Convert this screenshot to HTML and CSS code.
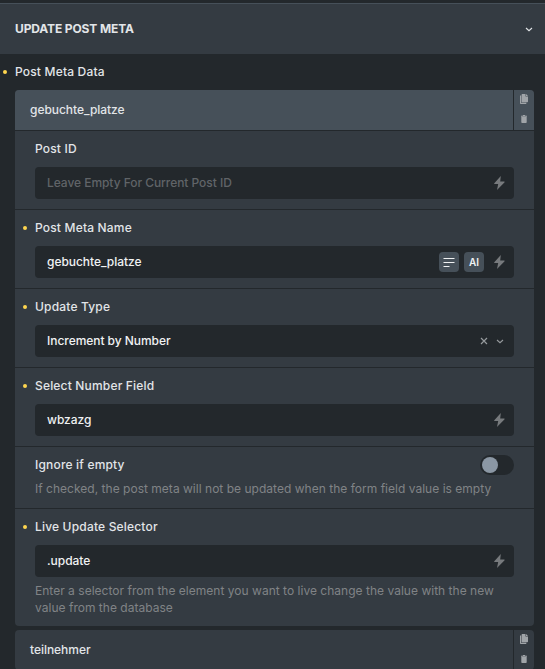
FILE: index.html
```html
<!DOCTYPE html>
<html lang="en">
<head>
<meta charset="utf-8">
<title>Update Post Meta</title>
<link rel="stylesheet" href="styles.css">
</head>
<body>
<svg class="defs" aria-hidden="true">
  <symbol id="bolt" viewBox="0 0 11 14"><path d="M6.8 0 .3 7.2q-.4.8.4.8H4.2L3 14l7.6-7.8q.3-.8-.5-.8H6.2z"/></symbol>
  <symbol id="copy" viewBox="0 0 8 10"><path d="M2.3 0h3.2v2.5H8v5q0 .7-.7.7h-5q-.7 0-.7-.7V.7q0-.7.7-.7zM6 0l2 2H6zM0 1.5h1.1v7.2h5.2V10H.7Q0 10 0 9.3z"/></symbol>
  <symbol id="trash" viewBox="0 0 6 8"><path d="M0 .7h1.7L2.1 0h1.8l.4.7H6v1H0zM.3 2h5.4v5.2q0 .8-.8.8H1.1q-.8 0-.8-.8z"/></symbol>
  <symbol id="chevron" viewBox="0 0 8 5"><path d="M1 1l3 2.7L7 1"/></symbol>
</svg>
<main class="panel">
  <header class="group-header">
    <h1>Update Post Meta</h1>
    <svg class="chevron"><use href="#chevron"/></svg>
  </header>
  <section class="group-body">
    <div class="label required">Post Meta Data</div>
    <div class="repeater">
      <article class="item">
        <div class="item-head open">
          <div class="item-title">gebuchte_platze</div>
          <div class="item-actions">
            <svg class="copy"><use href="#copy"/></svg>
            <svg class="trash"><use href="#trash"/></svg>
          </div>
        </div>
        <div class="control">
          <div class="label">Post ID</div>
          <div class="input"><span class="value placeholder">Leave Empty For Current Post ID</span><svg class="bolt"><use href="#bolt"/></svg></div>
        </div>
        <div class="control">
          <div class="label required">Post Meta Name</div>
          <div class="input">
            <span class="value">gebuchte_platze</span>
            <span class="chip"><svg class="lines" viewBox="0 0 12 9"><path d="M.5 .5h11M.5 4.5h11M.5 8.5h6"/></svg></span>
            <span class="chip">AI</span>
            <svg class="bolt"><use href="#bolt"/></svg>
          </div>
        </div>
        <div class="control">
          <div class="label required">Update Type</div>
          <div class="input select">
            <span class="value">Increment by Number</span>
            <svg class="clear" viewBox="0 0 8 8"><path d="M1 1l6 6M7 1L1 7"/></svg>
            <svg class="chevron"><use href="#chevron"/></svg>
          </div>
        </div>
        <div class="control">
          <div class="label required">Select Number Field</div>
          <div class="input"><span class="value">wbzazg</span><svg class="bolt"><use href="#bolt"/></svg></div>
        </div>
        <div class="control check">
          <div class="row"><div class="label">Ignore if empty</div><span class="toggle"></span></div>
          <p class="description">If checked, the post meta will not be updated when the form field value is empty</p>
        </div>
        <div class="control">
          <div class="label required">Live Update Selector</div>
          <div class="input"><span class="value">.update</span><svg class="bolt"><use href="#bolt"/></svg></div>
          <p class="description">Enter a selector from the element you want to live change the value with the new value from the database</p>
        </div>
      </article>
      <article class="item">
        <div class="item-head">
          <div class="item-title">teilnehmer</div>
          <div class="item-actions">
            <svg class="copy"><use href="#copy"/></svg>
            <svg class="trash"><use href="#trash"/></svg>
          </div>
        </div>
      </article>
    </div>
  </section>
</main>
</body>
</html>
```
FILE: styles.css
```css
* { box-sizing: border-box; }
html, body { height: 100%; }
body {
  margin: 0;
  overflow: hidden;
  background: #23282c;
  color: #e2e5e8;
  font: 500 12px/18px Inter, "Liberation Sans", sans-serif;
}
svg { display: block; flex: none; fill: currentColor; }
.defs { position: absolute; width: 0; height: 0; }
.panel { padding-top: 3px; }
.group-header {
  display: flex;
  align-items: center;
  justify-content: space-between;
  height: 51px;
  padding: 0 12px 0 15px;
  border-top: 1px solid #465059;
  background: #343b42;
}
h1 { margin: 0; font-size: 12px; font-weight: 700; text-transform: uppercase; letter-spacing: -.13px; }
.chevron { width: 8px; height: 5px; fill: none; stroke: currentColor; stroke-width: 1.1; }
.group-body { padding: 9px 11px 0 15px; }
.label { position: relative; height: 18px; letter-spacing: .18px; }
.required::before {
  content: "";
  position: absolute;
  left: -12px;
  top: 7px;
  width: 4px;
  height: 4px;
  border-radius: 50%;
  background: #ffd64f;
}
.repeater { display: flex; flex-direction: column; gap: 4px; margin-top: 9px; }
.item { overflow: hidden; border-radius: 4px; background: #343b42; }
.item-head { display: flex; height: 40px; }
.item-head.open { background: #465059; }
.item-title { flex: 1; padding: 11px 15px; letter-spacing: -.04px; }
.item-actions {
  display: flex;
  flex-direction: column;
  align-items: center;
  width: 21px;
  padding-top: 4px;
  border-left: 1px solid #23282c;
  color: #a0a4a8;
}
.copy { width: 8px; height: 10px; }
.trash { width: 6px; height: 8px; margin-top: 11px; }
.control { padding: 9px 20px 10px; border-top: 1px solid #23282c; }
.input {
  display: flex;
  align-items: center;
  height: 32px;
  margin-top: 9px;
  padding: 0 10px 0 12px;
  border-radius: 4px;
  background: #23282c;
  color: #f0f2f3;
}
.value { flex: 1; letter-spacing: -.05px; }
.placeholder { color: #606468; }
.bolt { width: 11px; height: 14px; margin: 0 -.5px 0 9.5px; color: #777a7d; }
.chip {
  display: grid;
  place-items: center;
  width: 20px;
  height: 20px;
  margin-left: 5px;
  border-radius: 4px;
  background: #465059;
  font-size: 10px;
  font-weight: 600;
}
.lines { width: 12px; height: 9px; fill: none; stroke: currentColor; }
.clear { width: 8px; height: 8px; margin-right: 8px; fill: none; stroke: #969a9d; stroke-width: 1.2; }
.select .chevron { color: #969a9d; }
.row { display: flex; justify-content: space-between; }
.check { padding-top: 8px; padding-bottom: 11px; }
.check .label { margin-top: 1px; }
.toggle { width: 34px; height: 20px; padding: 2px; border-radius: 10px; background: #23282c; }
.toggle::before { content: ""; display: block; width: 16px; height: 16px; border-radius: 50%; background: #8b97a4; }
.description { margin: 5px 0 0; color: #808386; font-weight: 400; letter-spacing: .02px; line-height: 17px; }
```
